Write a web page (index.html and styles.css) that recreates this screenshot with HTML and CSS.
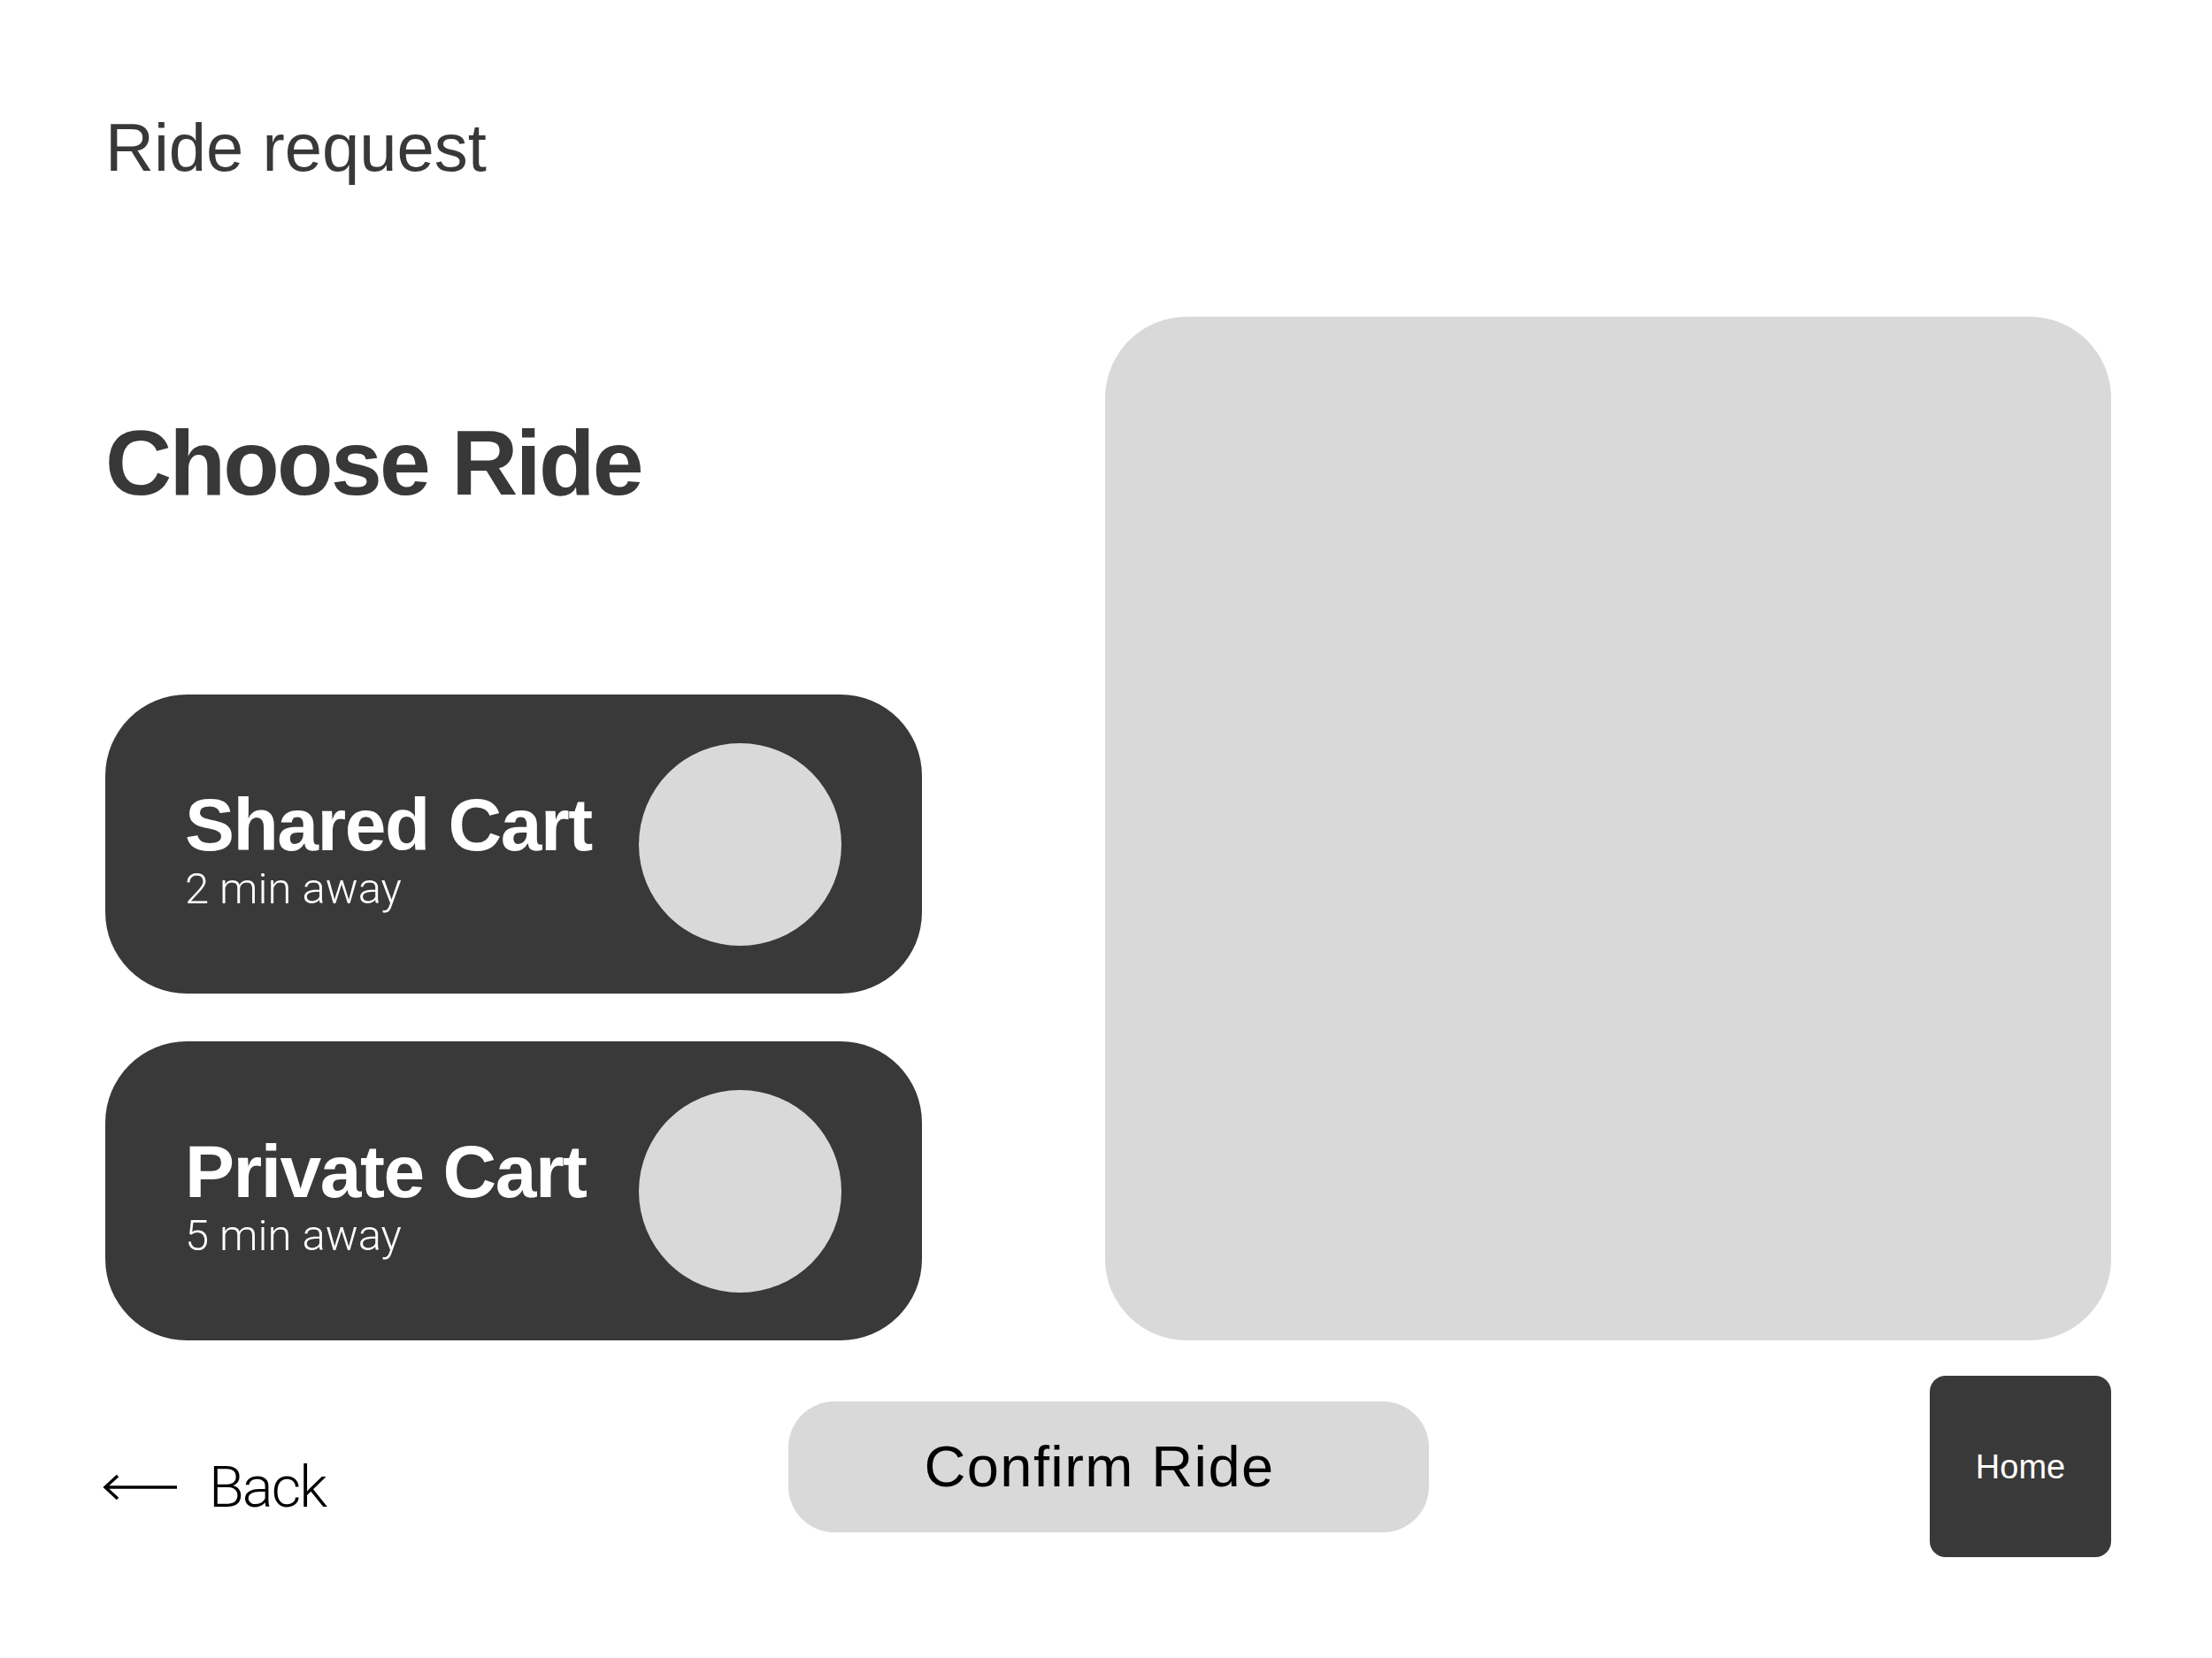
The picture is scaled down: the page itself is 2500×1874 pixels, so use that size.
FILE: index.html
```html
<!DOCTYPE html>
<html lang="en">
<head>
<meta charset="utf-8">
<title>Ride request</title>
<link rel="stylesheet" href="styles.css">
</head>
<body>
<div class="page">
  <header class="top">
    <h1 class="page-title">Ride request</h1>
  </header>
  <main class="main">
    <section class="choices">
      <h2 class="section-title">Choose Ride</h2>
      <div class="options">
        <div class="option">
          <div class="option-text">
            <div class="option-name">Shared Cart</div>
            <div class="option-eta">2 min away</div>
          </div>
          <div class="option-radio"></div>
        </div>
        <div class="option">
          <div class="option-text">
            <div class="option-name">Private Cart</div>
            <div class="option-eta">5 min away</div>
          </div>
          <div class="option-radio"></div>
        </div>
      </div>
    </section>
    <div class="map"></div>
  </main>
  <footer class="bottom">
    <a class="back" href="#">
      <svg class="back-arrow" viewBox="0 0 84 30" width="84" height="30" aria-hidden="true">
        <path d="M3 15 H84" fill="none" stroke="#000" stroke-width="3.5"/>
        <path d="M17 2 L3 15 L17 28" fill="none" stroke="#000" stroke-width="3.5" stroke-linejoin="miter"/>
      </svg>
      <span class="back-label">Back</span>
    </a>
    <button class="confirm" type="button">Confirm Ride</button>
    <button class="home" type="button">Home</button>
  </footer>
</div>
</body>
</html>
```

FILE: styles.css
```css
html, body {
  margin: 0;
  padding: 0;
  background: #ffffff;
}

body {
  font-family: "Liberation Sans", Arial, sans-serif;
  color: #383838;
}

.page {
  box-sizing: border-box;
  width: 2500px;
  padding: 129px 114px 0 119px;
}

.page-title {
  margin: 0;
  font-size: 76px;
  line-height: 1;
  font-weight: 400;
  color: #383838;
}

.main {
  margin-top: 153px;
  display: grid;
  grid-template-columns: 923px 1fr;
  column-gap: 207px;
  height: 1157px;
}

.choices {
  display: flex;
  flex-direction: column;
  padding-top: 113px;
}

.section-title {
  margin: 0;
  font-size: 104px;
  line-height: 1;
  font-weight: 700;
  letter-spacing: -2.7px;
  color: #383838;
}

.options {
  margin-top: auto;
  display: flex;
  flex-direction: column;
  gap: 54px;
}

.option {
  box-sizing: border-box;
  height: 338px;
  border-radius: 92px;
  background: #393939;
  display: flex;
  align-items: center;
  justify-content: space-between;
  padding: 0 91px 0 90px;
}

.option-text {
  color: #ffffff;
  padding-top: 10px;
}

.option-name {
  font-size: 84px;
  line-height: 1;
  font-weight: 700;
  letter-spacing: -1.5px;
}

.option-eta {
  margin-top: 6px;
  font-family: Roboto, "Liberation Sans", sans-serif;
  font-weight: 300;
  font-size: 49px;
  line-height: 1;
}

.option-radio {
  width: 229px;
  height: 229px;
  border-radius: 50%;
  background: #d9d9d9;
  flex: none;
}

.map {
  background: #d9d9d9;
  border-radius: 92px;
  height: 1157px;
}

.bottom {
  margin-top: 40px;
  display: grid;
  grid-template-columns: 1fr auto 1fr;
  align-items: center;
}

.back {
  justify-self: start;
  display: flex;
  align-items: center;
  gap: 36px;
  margin-left: -3px;
  margin-top: 47px;
  color: #000000;
  text-decoration: none;
}

.back-arrow {
  display: block;
  flex: none;
}

.back-label {
  font-family: Roboto, "Liberation Sans", sans-serif;
  font-weight: 300;
  font-size: 65px;
  line-height: 1;
  letter-spacing: -2px;
}

.confirm {
  width: 724px;
  height: 148px;
  border: none;
  border-radius: 52px;
  background: #d9d9d9;
  color: #000000;
  font-family: "Liberation Sans", Arial, sans-serif;
  font-size: 65px;
  line-height: 1;
  letter-spacing: 1.4px;
  padding: 0 20px 0 0;
}

.home {
  justify-self: end;
  width: 205px;
  height: 205px;
  border: none;
  border-radius: 18px;
  background: #393939;
  color: #ffffff;
  font-family: "Liberation Sans", Arial, sans-serif;
  font-size: 38px;
  line-height: 1;
  padding: 0;
}
```
